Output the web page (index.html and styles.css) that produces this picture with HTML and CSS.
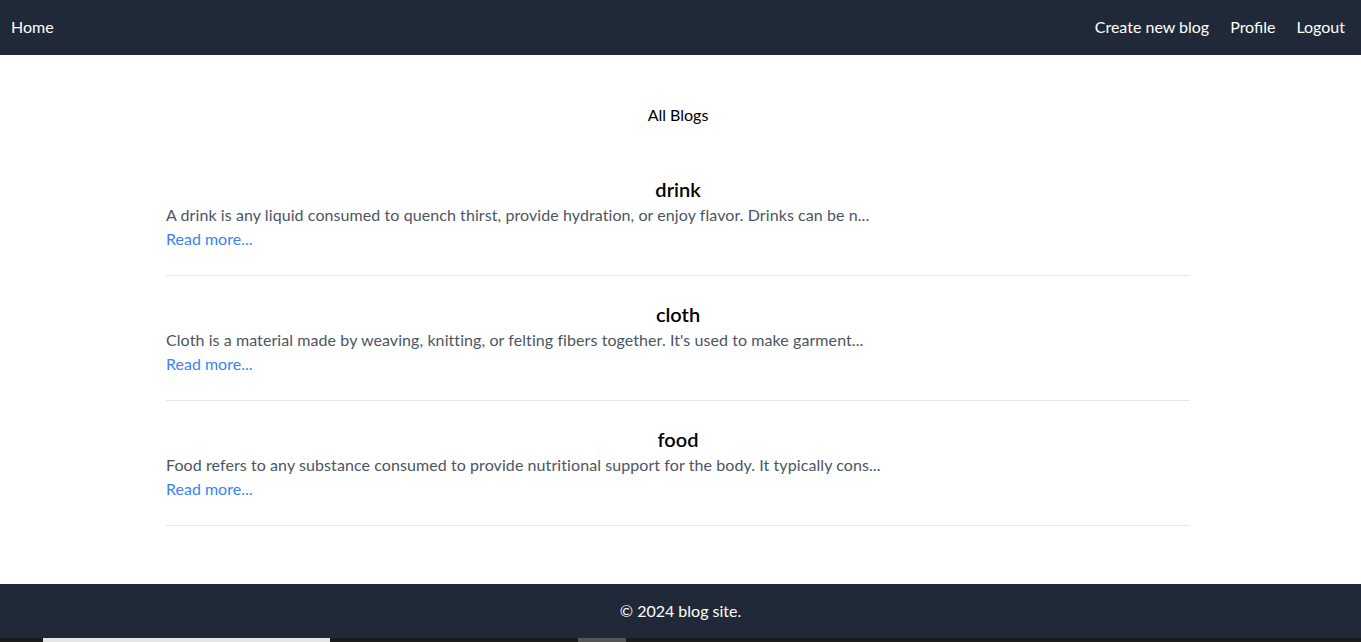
FILE: index.html
```html
<!DOCTYPE html>
<html lang="en">
<head>
<meta charset="utf-8">
<title>Blog</title>
<link rel="stylesheet" href="styles.css">
</head>
<body>
<nav class="nav">
  <a class="nav-link" href="#">Home</a>
  <div class="nav-right">
    <a class="nav-link" href="#">Create new blog</a>
    <a class="nav-link" href="#">Profile</a>
    <a class="nav-link" href="#">Logout</a>
  </div>
</nav>
<main class="main">
  <div class="container">
    <h1 class="page-title">All Blogs</h1>
    <article class="post">
      <h2 class="post-title">drink</h2>
      <p class="post-desc">A drink is any liquid consumed to quench thirst, provide hydration, or enjoy flavor. Drinks can be n...</p>
      <a class="read-more" href="#">Read more...</a>
    </article>
    <article class="post">
      <h2 class="post-title">cloth</h2>
      <p class="post-desc">Cloth is a material made by weaving, knitting, or felting fibers together. It's used to make garment...</p>
      <a class="read-more" href="#">Read more...</a>
    </article>
    <article class="post">
      <h2 class="post-title">food</h2>
      <p class="post-desc">Food refers to any substance consumed to provide nutritional support for the body. It typically cons...</p>
      <a class="read-more" href="#">Read more...</a>
    </article>
  </div>
</main>
<footer class="footer">© 2024 blog site.</footer>
<div class="bottom-strip">
  <span class="strip-bar"></span>
  <span class="strip-thumb"></span>
</div>
</body>
</html>
```

FILE: styles.css
```css
* { box-sizing: border-box; }
html, body { margin: 0; padding: 0; }
body {
  font-family: "Segoe UI", Lato, "Noto Sans", sans-serif;
  font-size: 16px;
  line-height: 24px;
  color: #000;
  background: #fff;
}
.nav {
  height: 55px;
  background: #1f2937;
  display: flex;
  align-items: center;
  justify-content: space-between;
  padding: 0 16px 2px 11px;
}
.nav-right { display: flex; gap: 21px; }
.nav-link { color: #fff; text-decoration: none; }
.main { padding: 48px 5px 58px 0; }
.container { max-width: 1024px; margin: 0 auto; }
.page-title {
  margin: 0 0 24px;
  font-size: 16px;
  font-weight: 400;
  line-height: 24px;
  text-align: center;
}
.post {
  padding: 24px 0;
  border-bottom: 1px solid #e5e7eb;
}
.post-title {
  margin: 0;
  font-size: 20px;
  line-height: 28px;
  font-weight: 600;
  text-align: center;
  color: #000;
}
.post-desc { margin: 0; color: #4b5563; letter-spacing: 0.08px; }
.read-more { color: #3b82f6; text-decoration: none; }
.footer {
  height: 54px;
  background: #1f2937;
  color: #fff;
  display: flex;
  align-items: center;
  justify-content: center;
}
.bottom-strip {
  height: 4px;
  background: #1c1c1c;
  display: flex;
}
.strip-bar { margin-left: 43px; width: 287px; background: #e6e6e6; }
.strip-thumb { margin-left: 248px; width: 48px; background: #555; }
```
